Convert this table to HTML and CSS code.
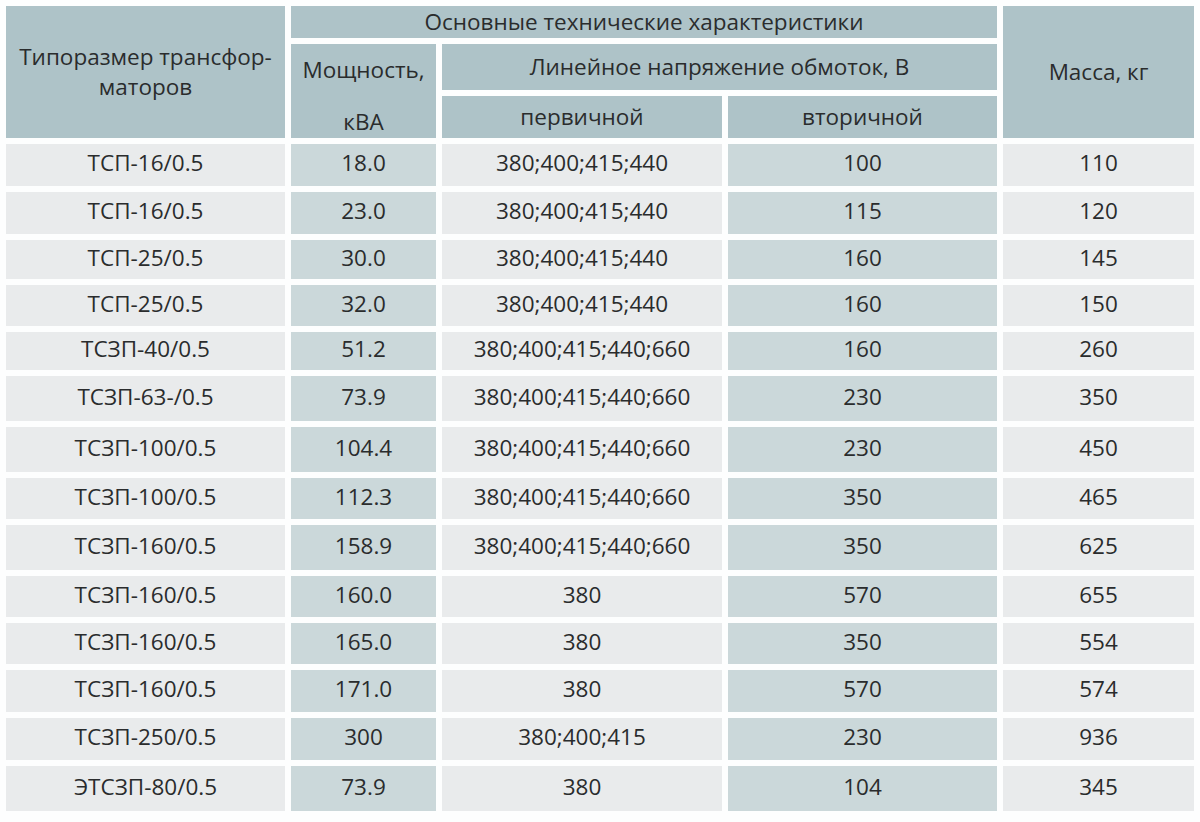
FILE: index.html
```html
<!DOCTYPE html>
<html lang="ru">
<head>
<meta charset="utf-8">
<title>Трансформаторы</title>
<link rel="stylesheet" href="styles.css">
</head>
<body>
<table class="spec">
  <colgroup>
    <col class="c-type">
    <col class="c-power">
    <col class="c-prim">
    <col class="c-sec">
    <col class="c-mass">
  </colgroup>
  <thead>
    <tr class="h1">
      <th rowspan="3" class="th-type">Типоразмер трансфор-<br>маторов</th>
      <th colspan="3">Основные технические характеристики</th>
      <th rowspan="3">Масса, кг</th>
    </tr>
    <tr class="h2">
      <th rowspan="2" class="th-power"><div class="power"><div class="power-l1">Мощность,</div><div class="power-l2">кВА</div></div></th>
      <th colspan="2">Линейное напряжение обмоток, В</th>
    </tr>
    <tr class="h3">
      <th>первичной</th>
      <th>вторичной</th>
    </tr>
  </thead>
  <tbody>
    <tr class="r42"><td>ТСП-16/0.5</td><td>18.0</td><td>380;400;415;440</td><td>100</td><td>110</td></tr>
    <tr class="r42"><td>ТСП-16/0.5</td><td>23.0</td><td>380;400;415;440</td><td>115</td><td>120</td></tr>
    <tr class="r39"><td>ТСП-25/0.5</td><td>30.0</td><td>380;400;415;440</td><td>160</td><td>145</td></tr>
    <tr class="r41"><td>ТСП-25/0.5</td><td>32.0</td><td>380;400;415;440</td><td>160</td><td>150</td></tr>
    <tr class="r38"><td>ТСЗП-40/0.5</td><td>51.2</td><td>380;400;415;440;660</td><td>160</td><td>260</td></tr>
    <tr class="r45"><td>ТСЗП-63-/0.5</td><td>73.9</td><td>380;400;415;440;660</td><td>230</td><td>350</td></tr>
    <tr class="r45"><td>ТСЗП-100/0.5</td><td>104.4</td><td>380;400;415;440;660</td><td>230</td><td>450</td></tr>
    <tr class="r41"><td>ТСЗП-100/0.5</td><td>112.3</td><td>380;400;415;440;660</td><td>350</td><td>465</td></tr>
    <tr class="r45"><td>ТСЗП-160/0.5</td><td>158.9</td><td>380;400;415;440;660</td><td>350</td><td>625</td></tr>
    <tr class="r41"><td>ТСЗП-160/0.5</td><td>160.0</td><td>380</td><td>570</td><td>655</td></tr>
    <tr class="r41"><td>ТСЗП-160/0.5</td><td>165.0</td><td>380</td><td>350</td><td>554</td></tr>
    <tr class="r42"><td>ТСЗП-160/0.5</td><td>171.0</td><td>380</td><td>570</td><td>574</td></tr>
    <tr class="r42"><td>ТСЗП-250/0.5</td><td>300</td><td>380;400;415</td><td>230</td><td>936</td></tr>
    <tr class="r45"><td>ЭТСЗП-80/0.5</td><td>73.9</td><td>380</td><td>104</td><td>345</td></tr>
  </tbody>
</table>
</body>
</html>
```
FILE: styles.css
```css
html, body {
  margin: 0;
  padding: 0;
  background: #fdfefe;
}

.spec {
  border-collapse: separate;
  border-spacing: 6px;
  table-layout: fixed;
  width: 1200px;
  font-family: "Open Sans", "Noto Sans", sans-serif;
  font-size: 22.5px;
  color: #2a2c2d;
}

.c-type { width: 279px; }
.c-power { width: 145px; }
.c-prim { width: 280px; }
.c-sec { width: 269px; }
.c-mass { width: 191px; }

.spec th,
.spec td {
  padding: 0;
  text-align: center;
  vertical-align: middle;
  font-weight: normal;
  line-height: 30px;
}

.spec th {
  background: #aec3c8;
}

.h1 { height: 32px; }
.h2 { height: 46px; }
.h3 { height: 42px; }

.th-power {
  vertical-align: top;
}

.power {
  padding-top: 9px;
}

.power-l1 {
  margin-bottom: 22px;
}

.spec td {
  background: #e9ebec;
  padding-bottom: 4px;
}

.spec td:nth-child(2),
.spec td:nth-child(4) {
  background: #cbd8da;
}

.r38 { height: 38px; }
.r39 { height: 39px; }
.r41 { height: 41px; }
.r42 { height: 42px; }
.r45 { height: 45px; }
```
